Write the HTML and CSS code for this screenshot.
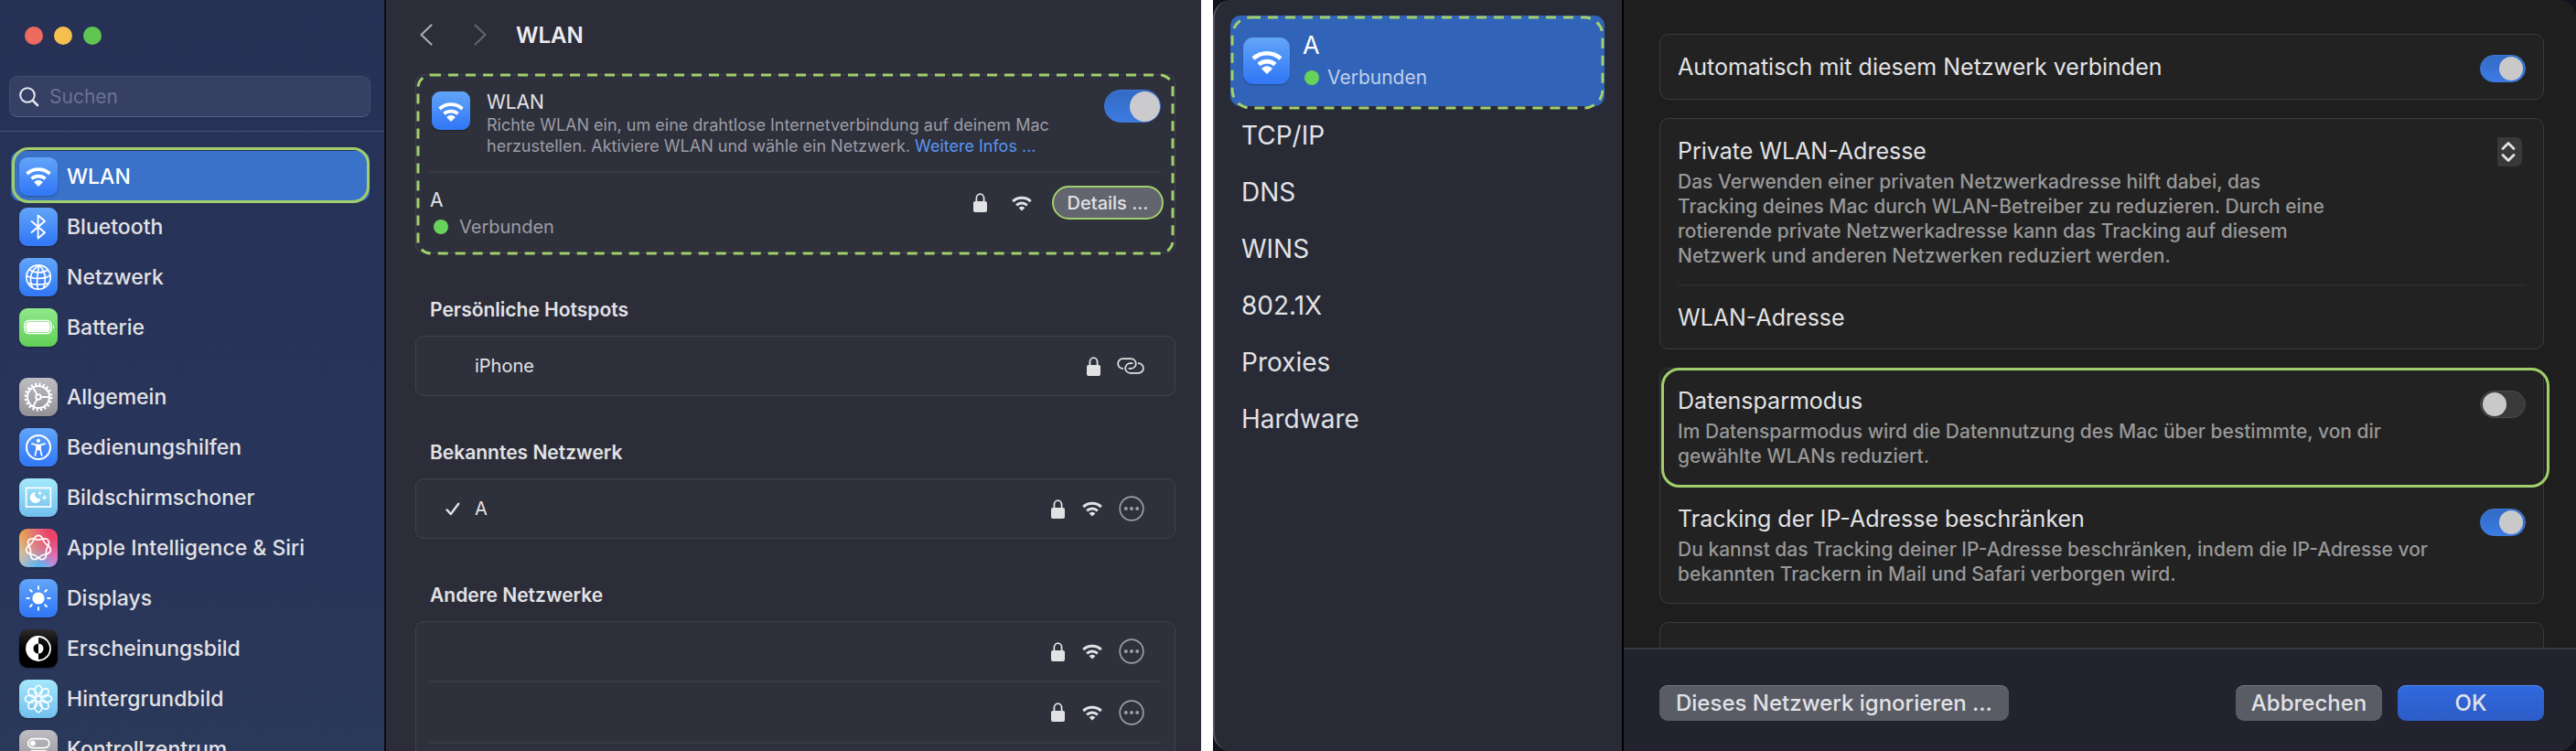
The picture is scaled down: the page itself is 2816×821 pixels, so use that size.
FILE: index.html
```
<!DOCTYPE html>
<html lang="de">
<head>
    <meta charset="UTF-8">
    <meta name="viewport" content="width=device-width, initial-scale=1.0">
    <title>WLAN</title>
    <link rel="stylesheet" href="styles.css">
</head>
<body>
    <svg class="sprite" aria-hidden="true">
        <symbol id="wifi" viewBox="6 9 30 23">
            <path d="M8.5 18A18.5 18.5 0 0 1 33.5 18M13.5 23.4A11.5 11.5 0 0 1 28.5 23.4" fill="none" stroke="currentColor" stroke-width="3.8"/>
            <path d="M16.7 27.2Q21 23.4 25.3 27.2L21 31.5z" fill="currentColor"/>
        </symbol>
        <symbol id="lock" viewBox="0 0 15 21">
            <path d="M3.4 10V5.6a4.1 4.4 0 0 1 8.2 0V10" fill="none" stroke="currentColor" stroke-width="1.8"/>
            <rect x="0" y="9" width="15" height="12" rx="2" fill="currentColor"/>
        </symbol>
        <symbol id="more" viewBox="0 0 28 28">
            <circle cx="14" cy="14" r="12.8" fill="none" stroke="currentColor" stroke-width="1.7"/>
            <circle cx="7.8" cy="14" r="2" fill="currentColor"/>
            <circle cx="14" cy="14" r="2" fill="currentColor"/>
            <circle cx="20.2" cy="14" r="2" fill="currentColor"/>
        </symbol>
    </svg>

    <div class="settings">
        <aside class="sidebar">
            <div class="lights">
                <span class="light red"></span>
                <span class="light yellow"></span>
                <span class="light green"></span>
            </div>
            <div class="search">
                <svg width="22" height="22" viewBox="0 0 22 22" fill="none" stroke="#e6e7ee" stroke-width="2" stroke-linecap="round"><circle cx="9" cy="9" r="7.8"/><path d="M14.8 14.8L20 20" stroke-width="2.6"/></svg>
                <input type="search" placeholder="Suchen" aria-label="Suchen">
            </div>
            <nav class="menu">
                <a href="#" class="menu-item active">
                    <span class="tile blue"><svg width="30" height="23"><use href="#wifi"/></svg></span>WLAN
                </a>
                <a href="#" class="menu-item">
                    <span class="tile blue"><svg viewBox="0 0 42 42" stroke-width="1.9" stroke-linejoin="round" stroke-linecap="round"><path d="M13.6 15L28 27.2L20.6 33.4V8.6L28 14.8L13.6 27"/></svg></span>Bluetooth
                </a>
                <a href="#" class="menu-item">
                    <span class="tile blue"><svg viewBox="0 0 42 42" stroke-width="1.7"><circle cx="21" cy="21" r="13.2"/><path d="M22 8C13 13 10 22 14.5 32.5M22 8C20 15 19 24 20 34M22 8C28 14 30 23 26.5 33M11 12.5C17 17 26 17 31.5 13M8 19.5C15 23.5 27 23.5 34 19M9.8 27.5C16 29.5 25 29.5 32 27.5"/></svg></span>Netzwerk
                </a>
                <a href="#" class="menu-item">
                    <span class="tile lime"><svg viewBox="0 0 42 42" stroke-width="1.5"><rect x="6" y="13.5" width="29" height="14" rx="4.5"/><rect x="8.3" y="15.8" width="24.4" height="9.4" rx="2.5" fill="#fff"/><path d="M37 18.2Q39.6 20.5 37 22.8z" fill="#fff" stroke="none"/></svg></span>Batterie
                </a>
                <hr class="menu-gap">
                <a href="#" class="menu-item">
                    <span class="tile gray"><svg viewBox="0 0 42 42" stroke-width="2"><circle cx="21" cy="21" r="12"/><circle cx="21" cy="21" r="14" stroke-width="3" stroke-dasharray="2.2 2.2"/><circle cx="21" cy="21" r="2.8"/><path d="M23.8 21H33M19.6 18.6L15 10.6M19.6 23.4L15 31.4"/></svg></span>Allgemein
                </a>
                <a href="#" class="menu-item">
                    <span class="tile blue"><svg viewBox="0 0 42 42" stroke-width="2"><circle cx="21" cy="21" r="13"/><circle cx="21" cy="13.8" r="2.1" fill="#fff" stroke="none"/><path d="M14 17.2L19 18.4V23L17.4 30M28 17.2L23 18.4V23L24.6 30M19 23.6L21 22.6L23 23.6" stroke-width="1.7" stroke-linecap="round"/><path d="M18.6 17.8h4.8v6.4h-4.8z" fill="#fff" stroke="none"/></svg></span>Bedienungshilfen
                </a>
                <a href="#" class="menu-item">
                    <span class="tile cyan"><svg viewBox="0 0 42 42" stroke-width="1.7"><rect x="7.6" y="10.4" width="26.8" height="20.6"/><path d="M17.3 15A6 6 0 1 0 23.6 22.4A5.6 5.6 0 0 1 17.3 15zM22.6 13.5l.8 2 2 .8-2 .8-.8 2-.8-2-2-.8 2-.8zM27.6 17.6l.9 2.4 2.4.9-2.4.9-.9 2.4-.9-2.4-2.4-.9 2.4-.9z" fill="#fff" stroke="none"/></svg></span>Bildschirmschoner
                </a>
                <a href="#" class="menu-item">
                    <span class="tile siri"><svg viewBox="-21 -21 42 42" stroke-width="1.7"><path id="petal" d="M-7-5.6C-4.5-8.7-4.5-13.6 0-13.6S4.5-8.7 7-5.6"/><use href="#petal" transform="rotate(51.43)"/><use href="#petal" transform="rotate(102.86)"/><use href="#petal" transform="rotate(154.29)"/><use href="#petal" transform="rotate(205.71)"/><use href="#petal" transform="rotate(257.14)"/><use href="#petal" transform="rotate(308.57)"/></svg></span>Apple Intelligence &amp; Siri
                </a>
                <a href="#" class="menu-item">
                    <span class="tile blue"><svg viewBox="0 0 42 42" stroke-width="2" stroke-linecap="round"><circle cx="21" cy="21" r="6.6" fill="#fff" stroke="none"/><path d="M21 8.3v2.6M21 31.1v2.6M8.3 21h2.6M31.1 21h2.6M12 12l1.8 1.8M28.2 28.2L30 30M12 30l1.8-1.8M28.2 13.8L30 12"/></svg></span>Displays
                </a>
                <a href="#" class="menu-item">
                    <span class="tile black"><svg viewBox="0 0 42 42" stroke-width="1.8"><circle cx="21" cy="21" r="13"/><path d="M21 8a13 13 0 0 0 0 26v-7.5a5.5 5.5 0 0 1 0-11z" fill="#fff" stroke="none"/><path d="M21 15.5a5.5 5.5 0 0 1 0 11z" fill="#fff" stroke="none"/></svg></span>Erscheinungsbild
                </a>
                <a href="#" class="menu-item">
                    <span class="tile cyan"><svg viewBox="-21 -21 42 42" stroke-width="1.6"><g id="pair"><ellipse cy="-8.8" rx="4" ry="5.8"/><ellipse cy="8.8" rx="4" ry="5.8"/></g><use href="#pair" transform="rotate(45)"/><use href="#pair" transform="rotate(90)"/><use href="#pair" transform="rotate(135)"/></svg></span>Hintergrundbild
                </a>
                <a href="#" class="menu-item">
                    <span class="tile gray"><svg viewBox="0 0 42 42" stroke-width="1.8"><rect x="9.8" y="9.6" width="23" height="10" rx="5"/><circle cx="14.8" cy="14.6" r="3" fill="#fff" stroke="none"/><rect x="9.8" y="23" width="23" height="10" rx="5" fill="#fff"/></svg></span>Kontrollzentrum
                </a>
            </nav>
        </aside>

        <main class="content">
            <header class="toolbar">
                <button class="nav-btn" aria-label="Zurück"><svg width="14" height="24" viewBox="0 0 14 24"><path d="M12.5 1.5L1.5 12L12.5 22.5"/></svg></button>
                <button class="nav-btn dim" aria-label="Vorwärts"><svg width="14" height="24" viewBox="0 0 14 24"><path d="M1.5 1.5L12.5 12L1.5 22.5"/></svg></button>
                <h1>WLAN</h1>
            </header>

            <section class="card">
                <svg class="dashes" aria-hidden="true"><rect x="2" y="2" rx="14"/></svg>
                <div class="wlan-row">
                    <span class="tile blue"><svg width="30" height="23"><use href="#wifi"/></svg></span>
                    <div class="wlan-text">
                        <label for="wlan">WLAN</label>
                        <p>Richte WLAN ein, um eine drahtlose Internetverbindung auf deinem Mac herzustellen. Aktiviere WLAN und wähle ein Netzwerk. <a href="#">Weitere Infos ...</a></p>
                    </div>
                    <input type="checkbox" class="switch large" id="wlan" checked>
                </div>
                <div class="current-row">
                    <div class="current-text">
                        <div class="name">A</div>
                        <div class="status"><span class="dot"></span>Verbunden</div>
                    </div>
                    <svg class="lock"><use href="#lock"/></svg>
                    <svg class="wifi"><use href="#wifi"/></svg>
                    <button class="details">Details ...</button>
                </div>
            </section>

            <h2>Persönliche Hotspots</h2>
            <section class="card">
                <div class="net-row">
                    <span class="check"></span>
                    <span class="net-name">iPhone</span>
                    <svg class="lock"><use href="#lock"/></svg>
                    <svg class="link" viewBox="0 0 30 18" fill="none" stroke="currentColor" stroke-width="1.7" stroke-linecap="round"><path d="M6.5 11.8A5.3 5.3 0 0 1 6.3 1.2H15.5A5.3 5.3 0 0 1 15.5 11.8H13.4"/><path d="M23.5 6.2A5.3 5.3 0 0 1 23.7 16.8H14.5A5.3 5.3 0 0 1 14.5 6.2H16.6"/></svg>
                </div>
            </section>

            <h2>Bekanntes Netzwerk</h2>
            <section class="card">
                <div class="net-row">
                    <span class="check"><svg width="16" height="15" viewBox="0 0 16 15" fill="none" stroke="currentColor" stroke-width="2.4" stroke-linecap="round" stroke-linejoin="round"><path d="M1.6 8.4L5.8 13L14.2 1.8"/></svg></span>
                    <span class="net-name">A</span>
                    <svg class="lock"><use href="#lock"/></svg>
                    <svg class="wifi"><use href="#wifi"/></svg>
                    <button class="more" aria-label="Mehr"><svg width="28" height="28"><use href="#more"/></svg></button>
                </div>
            </section>

            <h2>Andere Netzwerke</h2>
            <section class="card">
                <div class="net-row">
                    <span class="net-name"></span>
                    <svg class="lock"><use href="#lock"/></svg>
                    <svg class="wifi"><use href="#wifi"/></svg>
                    <button class="more" aria-label="Mehr"><svg width="28" height="28"><use href="#more"/></svg></button>
                </div>
                <div class="net-row">
                    <span class="net-name"></span>
                    <svg class="lock"><use href="#lock"/></svg>
                    <svg class="wifi"><use href="#wifi"/></svg>
                    <button class="more" aria-label="Mehr"><svg width="28" height="28"><use href="#more"/></svg></button>
                </div>
                <div class="net-row"></div>
            </section>
        </main>
    </div>

    <div class="backdrop">
        <div class="dialog">
            <nav class="tabs">
                <a href="#" class="tab-current">
                    <svg class="dashes" aria-hidden="true"><rect x="2" y="2" rx="20"/></svg>
                    <span class="tile big blue"><svg width="36" height="28"><use href="#wifi"/></svg></span>
                    <span>
                        <span class="tab-name">A</span>
                        <span class="tab-status"><span class="dot"></span>Verbunden</span>
                    </span>
                </a>
                <a href="#" class="tab">TCP/IP</a>
                <a href="#" class="tab">DNS</a>
                <a href="#" class="tab">WINS</a>
                <a href="#" class="tab">802.1X</a>
                <a href="#" class="tab">Proxies</a>
                <a href="#" class="tab">Hardware</a>
            </nav>

            <div class="panel">
                <div class="options">
                    <section class="box">
                        <div class="option single">
                            <label for="auto">Automatisch mit diesem Netzwerk verbinden</label>
                            <input type="checkbox" class="switch" id="auto" checked>
                        </div>
                    </section>

                    <section class="box">
                        <div class="option">
                            <div class="option-text narrow">
                                <label for="private">Private WLAN-Adresse</label>
                                <p>Das Verwenden einer privaten Netzwerkadresse hilft dabei, das Tracking deines Mac durch WLAN-Betreiber zu reduzieren. Durch eine rotierende private Netzwerkadresse kann das Tracking auf diesem Netzwerk und anderen Netzwerken reduziert werden.</p>
                            </div>
                            <div class="stepper">
                                <select id="private"><option value="rotating"></option></select>
                                <svg viewBox="0 0 27 32" aria-hidden="true"><path d="M6 12.5L12 6.5L18 12.5M6 19.5L12 25.5L18 19.5"/></svg>
                            </div>
                        </div>
                        <div class="option single">
                            <span>WLAN-Adresse</span>
                        </div>
                    </section>

                    <section class="box">
                        <div class="option framed">
                            <div class="option-text">
                                <label for="saver">Datensparmodus</label>
                                <p>Im Datensparmodus wird die Datennutzung des Mac über bestimmte, von dir gewählte WLANs reduziert.</p>
                            </div>
                            <input type="checkbox" class="switch" id="saver">
                        </div>
                        <div class="option">
                            <div class="option-text">
                                <label for="tracking">Tracking der IP-Adresse beschränken</label>
                                <p>Du kannst das Tracking deiner IP-Adresse beschränken, indem die IP-Adresse vor bekannten Trackern in Mail und Safari verborgen wird.</p>
                            </div>
                            <input type="checkbox" class="switch" id="tracking" checked>
                        </div>
                    </section>

                    <section class="box">
                        <div class="option single"></div>
                    </section>
                </div>

                <footer class="actions">
                    <button class="btn forget">Dieses Netzwerk ignorieren ...</button>
                    <button class="btn">Abbrechen</button>
                    <button class="btn primary">OK</button>
                </footer>
            </div>
        </div>
    </div>
</body>
</html>
```
FILE: styles.css
```
* {
    box-sizing: border-box;
}
body {
    display: flex;
    gap: 13px;
    height: 100vh;
    margin: 0;
    overflow: hidden;
    background: #fff;
    color: #e2e2e5;
    font-family: Inter, "Liberation Sans", sans-serif;
}
a {
    color: inherit;
    text-decoration: none;
}
p, h1, h2 {
    margin: 0;
}
button, input, select {
    margin: 0;
    border: 0;
    color: inherit;
    font-family: inherit;
}
svg {
    display: block;
    flex: none;
}
.sprite {
    display: none;
}

/* settings window */
.settings {
    display: flex;
    flex: 1313 1 0;
    min-width: 0;
    background: #2c2d39;
    overflow: hidden;
}
.sidebar {
    flex: 0 0 422px;
    border-right: 2px solid #0b0c14;
    background: linear-gradient(#273156, #28345a 60%, #2a385a);
    overflow: hidden;
}
.lights {
    display: flex;
    gap: 12px;
    padding: 29px 27px 34px;
}
.light {
    width: 20px;
    height: 20px;
    border-radius: 50%;
}
.red {
    background: #ed6a5f;
}
.yellow {
    background: #f5bf4f;
}
.green {
    background: #61c554;
}
.search {
    display: flex;
    align-items: center;
    gap: 11px;
    height: 45px;
    margin: 0 15px 0 10px;
    padding: 0 10px;
    border: 1px solid #424c70;
    border-bottom-color: #56608a;
    border-radius: 9px;
    background: #363f64;
}
.search input {
    flex: 1;
    min-width: 0;
    padding: 0;
    background: none;
    font-size: 21px;
    outline: none;
}
.search input::placeholder {
    color: #6a7393;
    opacity: 1;
}
.menu {
    margin-top: 15px;
    padding: 21px 16px 0 12px;
    border-top: 1px solid #47527a;
}
.menu-item {
    position: relative;
    display: flex;
    align-items: center;
    gap: 10px;
    height: 55px;
    padding-left: 9px;
    font-size: 23px;
    font-weight: 500;
    white-space: nowrap;
}
.menu-item.active {
    border-radius: 10px;
    background: #3a71c9;
    color: #fff;
}
.menu-item.active::after {
    content: "";
    position: absolute;
    inset: -4px 0 -2px 1px;
    border: 3px solid #a1cf6b;
    border-radius: 18px;
}
.menu-gap {
    height: 21px;
    margin: 0;
    border: 0;
}
.tile {
    display: flex;
    align-items: center;
    justify-content: center;
    flex: none;
    width: 42px;
    height: 42px;
    border-radius: 9px;
    color: #fff;
    box-shadow: 0 1px 2px rgba(0, 0, 0, 0.3);
}
.tile svg {
    fill: none;
    stroke: #fff;
}
.tile svg[viewBox] {
    width: 42px;
    height: 42px;
}
.tile.big {
    width: 51px;
    height: 51px;
    border-radius: 11px;
}
.blue {
    background: linear-gradient(#62a5f8, #347af6 90%);
}
.lime {
    background: linear-gradient(#8fe88a, #62cf58);
}
.gray {
    background: linear-gradient(#bdbdc2, #919196);
}
.cyan {
    background: linear-gradient(#a4e8fb, #72bfee);
}
.black {
    background: linear-gradient(#2b2b2b, #000 50%);
}
.siri {
    background:
        radial-gradient(circle at 100% 0, #ea4567 20%, rgba(234, 69, 103, 0) 75%),
        radial-gradient(circle at 0 0, #f2b03c, rgba(242, 176, 60, 0) 75%),
        radial-gradient(circle at 50% 100%, #4cb7f5, rgba(76, 183, 245, 0) 50%),
        linear-gradient(90deg, #b5c6d6, #d98bf5);
}

.content {
    flex: 1;
    min-width: 0;
    padding: 0 28px 0 32px;
}
.toolbar {
    display: flex;
    align-items: center;
    height: 76px;
    margin-bottom: 5px;
    padding-left: 5px;
}
.toolbar h1 {
    font-size: 24px;
    font-weight: 600;
    color: #ececef;
}
.nav-btn {
    padding: 0;
    margin-right: 45px;
    background: none;
}
.nav-btn svg {
    fill: none;
    stroke: #a9aab0;
    stroke-width: 2.2;
    stroke-linecap: round;
    stroke-linejoin: round;
}
.nav-btn.dim {
    margin-right: 32px;
}
.nav-btn.dim svg {
    stroke: #62636d;
}
.card {
    position: relative;
    border: 1px solid #40424d;
    border-radius: 9px;
    background: #2e303c;
}
.content h2 {
    margin: 47px 0 13px 16px;
    font-size: 21px;
    font-weight: 600;
    line-height: 30px;
}
/* dashed highlight drawn over a block */
.dashes {
    position: absolute;
    top: -2px;
    left: 0;
    width: 100%;
    height: calc(100% + 5px);
}
.dashes rect {
    width: calc(100% - 4px);
    height: calc(100% - 4px);
    fill: none;
    stroke: #a1cf6b;
    stroke-width: 3;
    stroke-dasharray: 11 8;
}
.wlan-row, .current-row {
    position: relative;
    display: flex;
    margin: 0 15px;
}
.wlan-row {
    padding: 16px 0;
    border-bottom: 2px solid #373944;
}
.wlan-row .tile {
    margin: 2px 18px 0 2px;
}
.wlan-text {
    flex: 1;
    font-size: 21px;
    line-height: 27px;
}
.wlan-text label {
    display: block;
}
.wlan-text p {
    max-width: 640px;
    color: #9d9da4;
    font-size: 18px;
    line-height: 23px;
}
.wlan-text a {
    color: #5896f3;
}
.current-row {
    padding: 14px 0;
}
.current-row > svg, .current-row > button {
    align-self: flex-start;
}
.current-text {
    flex: 1;
}
.name {
    font-size: 21px;
    line-height: 31px;
}
.status {
    display: flex;
    align-items: center;
    gap: 12px;
    padding-left: 4px;
    color: #9d9da4;
    font-size: 20px;
    line-height: 28px;
}
.dot {
    width: 16px;
    height: 16px;
    border-radius: 50%;
    background: #67d35c;
}
.lock {
    width: 15px;
    height: 21px;
}
.wifi {
    width: 24px;
    height: 18px;
    margin: 0 17px 0 18px;
}
.current-row .lock {
    margin-top: 8px;
}
.current-row .wifi {
    margin: 10px 21px 0 26px;
}
.details {
    width: 122px;
    height: 37px;
    margin-right: -3px;
    padding: 0;
    border: 2px solid #a1cf6b;
    border-radius: 19px;
    background: #62646e;
    font-size: 20px;
    font-weight: 500;
}
.net-row {
    display: flex;
    align-items: center;
    min-height: 64px;
    margin: 0 15px;
    padding: 0 18px 0 49px;
    font-size: 20px;
}
.net-row + .net-row {
    min-height: 67px;
    border-top: 2px solid #373944;
}
.check {
    width: 32px;
    margin-left: -32px;
}
.net-name {
    flex: 1;
}
.link {
    width: 30px;
    height: 18px;
    margin-left: 18px;
}
.more {
    padding: 0;
    background: none;
    color: #9d9da4;
}

/* network dialog */
.backdrop {
    flex: 1490 1 0;
    min-width: 0;
    background: #12131d;
}
.dialog {
    display: flex;
    height: 100%;
    border-left: 2px solid #53555f;
    border-radius: 20px;
    background: #282a36;
    overflow: hidden;
}
.tabs {
    flex: 0 0 447px;
    padding: 17px 19px 0 17px;
    border-right: 2px solid #000;
}
.tab-current {
    position: relative;
    display: flex;
    align-items: center;
    gap: 14px;
    height: 99px;
    margin-bottom: 1px;
    padding-left: 14px;
    border-radius: 11px;
    background: #3164b8;
    color: #fff;
}
.tab-current .dashes {
    top: 0;
    height: calc(100% + 4px);
}
.tab-name, .tab-status {
    display: flex;
    align-items: center;
    gap: 9px;
    font-size: 27px;
    line-height: 36px;
}
.tab-status {
    padding-left: 2px;
    color: #bfcfec;
    font-size: 21px;
    line-height: 34px;
}
.tab {
    display: block;
    padding-left: 12px;
    font-size: 28px;
    line-height: 62px;
}
.panel {
    display: flex;
    flex-direction: column;
    flex: 1;
    min-width: 0;
    background: #1e1e1e;
}
.options {
    display: flex;
    flex-direction: column;
    flex: 1;
    gap: 20px;
    min-height: 0;
    padding: 37px 35px 0 39px;
    overflow: hidden;
}
.box {
    flex: none;
    border: 1px solid #3b3b3b;
    border-radius: 10px;
    background: #222;
}
.option {
    position: relative;
    display: flex;
    align-items: flex-start;
    justify-content: space-between;
    margin: 0 19px;
    padding: 18px 0;
    font-size: 25px;
    line-height: 34px;
}
.option + .option {
    border-top: 2px solid #2b2b2b;
}
.option.single {
    align-items: center;
    min-height: 70px;
    padding: 0;
}
.option-text {
    max-width: 855px;
}
.option-text.narrow {
    max-width: 725px;
}
.option label {
    display: block;
}
.option p {
    margin-top: 3px;
    color: #989898;
    font-size: 21px;
    font-weight: 500;
    line-height: 27px;
}
.option.framed {
    z-index: 1;
}
.framed::before {
    content: "";
    position: absolute;
    inset: -1px -26px -3px -18px;
    border: 3px solid #a1cf6b;
    border-radius: 20px;
    pointer-events: none;
}
.switch {
    appearance: none;
    display: flex;
    align-items: center;
    flex: none;
    width: 50px;
    height: 30px;
    margin: 6px 0 2px;
    padding: 0 2px;
    border: 1px solid #4a4a4a;
    border-radius: 18px;
    background: #3a3a3a;
}
.switch::before {
    content: "";
    width: 26px;
    height: 26px;
    border-radius: 50%;
    background: #c9c9c9;
}
.switch:checked {
    justify-content: flex-end;
    border-color: #3f7ad6;
    background: linear-gradient(#336bc4, #3c7be4);
}
.switch.large {
    width: 62px;
    height: 36px;
    margin: 0;
    padding: 0;
}
.switch.large::before {
    width: 33px;
    height: 33px;
    background: #cbcbcd;
}
.stepper {
    position: relative;
    width: 27px;
    height: 32px;
    margin: 2px 4px 0 0;
}
.stepper select {
    appearance: none;
    display: block;
    width: 100%;
    height: 100%;
    padding: 0;
    border-radius: 2px 7px 7px 2px;
    background: #393939;
}
.stepper svg {
    position: absolute;
    inset: 0;
    fill: none;
    stroke: #e2e2e2;
    stroke-width: 2.8;
    stroke-linecap: round;
    stroke-linejoin: round;
    pointer-events: none;
}
.actions {
    display: flex;
    align-items: center;
    gap: 17px;
    flex: none;
    padding: 39px 35px 33px 39px;
    border-top: 2px solid #363742;
    background: #22232f;
}
.btn {
    min-width: 160px;
    height: 39px;
    padding: 0 16px;
    border-radius: 9px;
    background: #595b65;
    box-shadow: inset 0 1px 0 #72747d;
    font-size: 24px;
    font-weight: 500;
}
.btn.forget {
    margin-right: auto;
    padding: 0 18px;
}
.btn.primary {
    background: linear-gradient(#3169df, #2c5cc6);
    box-shadow: inset 0 1px 0 #5585e6;
}
```
